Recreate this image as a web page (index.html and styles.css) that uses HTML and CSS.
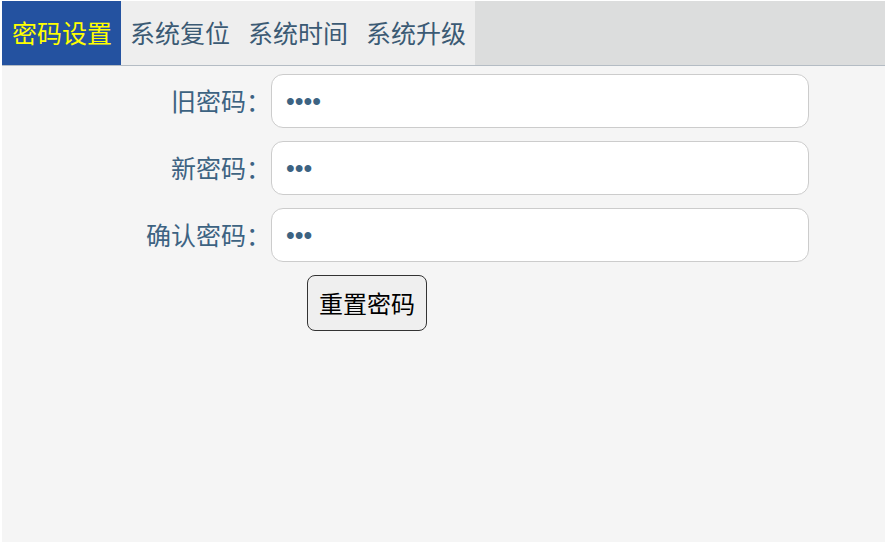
FILE: index.html
```html
<!DOCTYPE html>
<html lang="zh-CN">
<head>
  <meta charset="UTF-8">
  <meta name="viewport" content="width=device-width, initial-scale=1.0">
  <title>系统设置</title>
  <link rel="stylesheet" href="styles.css">
</head>
<body>
  <div class="panel">
    <ul class="tabs">
      <li class="tab active">密码设置</li>
      <li class="tab">系统复位</li>
      <li class="tab">系统时间</li>
      <li class="tab">系统升级</li>
    </ul>

    <form class="pwd-form" onsubmit="return false">
      <label class="label" for="old-pwd">旧密码：</label>
      <input class="field" id="old-pwd" type="password" value="1234">

      <label class="label" for="new-pwd">新密码：</label>
      <input class="field" id="new-pwd" type="password" value="123">

      <label class="label" for="confirm-pwd">确认密码：</label>
      <input class="field" id="confirm-pwd" type="password" value="123">

      <div class="actions">
        <button class="reset-btn" type="submit">重置密码</button>
      </div>
    </form>
  </div>
</body>
</html>
```

FILE: styles.css
```css
:root {
  --nav-bg: #dcdddd;
  --tab-bg: #eeeeee;
  --active-bg: #2452a0;
  --active-text: #ffff00;
  --text: #3b5a74;
  --label: #3d6382;
  --page: #f5f5f5;
}

body {
  margin: 1px 0 0 2px;
  background-color: #fff;
  font-family: "Microsoft YaHei", "Noto Sans CJK SC", sans-serif;
}

.panel {
  background-color: var(--page);
  min-height: 541px;
}

.tabs {
  display: flex;
  margin: 0;
  padding: 0;
  list-style: none;
  background-color: var(--nav-bg);
  border-bottom: 1px solid #b4bcc4;
  height: 64px;
}

.tab {
  display: flex;
  align-items: center;
  padding: 0 9px 2px;
  font-size: 25px;
  color: var(--text);
  background-color: var(--tab-bg);
}

.tab.active {
  background-color: var(--active-bg);
  color: var(--active-text);
  padding: 0 9px 2px 10px;
}

.pwd-form {
  display: grid;
  grid-template-columns: 269px 538px;
  row-gap: 13px;
  align-items: center;
  padding-top: 8px;
}

.label {
  text-align: right;
  font-size: 25px;
  color: var(--label);
  padding-bottom: 2px;
}

.field {
  box-sizing: border-box;
  height: 54px;
  border: 1px solid #cccccc;
  border-radius: 12px;
  background-color: #fff;
  padding: 0 14px;
  font-family: "Liberation Sans", sans-serif;
  font-size: 25px;
  color: var(--label);
  outline: none;
}

.actions {
  grid-column: 2;
  padding-left: 36px;
}

.reset-btn {
  box-sizing: border-box;
  height: 56px;
  width: 120px;
  border: 1px solid #333;
  border-radius: 8px;
  background-color: #efefef;
  color: #000;
  font-family: inherit;
  font-size: 24px;
  padding: 0 0 2px;
}
```
